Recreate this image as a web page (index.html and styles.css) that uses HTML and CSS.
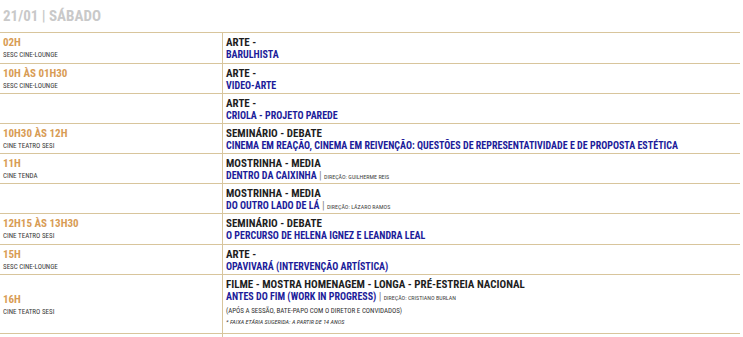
FILE: index.html
```html
<!DOCTYPE html>
<html lang="pt">
<head>
<meta charset="utf-8">
<link rel="stylesheet" href="styles.css">
</head>
<body>
<h2 class="day">21/01 | SÁBADO</h2>
<table class="prog">
  <tr class="r r31">
    <td class="when"><div class="time">02H</div><div class="place">SESC CINE-LOUNGE</div></td>
    <td class="what"><div class="cat">ARTE -</div><div class="title">BARULHISTA</div></td>
  </tr>
  <tr class="r">
    <td class="when"><div class="time">10H ÀS 01H30</div><div class="place">SESC CINE-LOUNGE</div></td>
    <td class="what"><div class="cat">ARTE -</div><div class="title">VIDEO-ARTE</div></td>
  </tr>
  <tr class="r">
    <td class="when"></td>
    <td class="what"><div class="cat">ARTE -</div><div class="title">CRIOLA - PROJETO PAREDE</div></td>
  </tr>
  <tr class="r">
    <td class="when"><div class="time">10H30 ÀS 12H</div><div class="place">CINE TEATRO SESI</div></td>
    <td class="what"><div class="cat">SEMINÁRIO - DEBATE</div><div class="title">CINEMA EM REAÇÃO, CINEMA EM REIVENÇÃO: QUESTÕES DE REPRESENTATIVIDADE E DE PROPOSTA ESTÉTICA</div></td>
  </tr>
  <tr class="r">
    <td class="when"><div class="time">11H</div><div class="place">CINE TENDA</div></td>
    <td class="what"><div class="cat">MOSTRINHA - MEDIA</div><div class="title">DENTRO DA CAIXINHA <span class="sep">|</span> <span class="dir">DIREÇÃO: GUILHERME REIS</span></div></td>
  </tr>
  <tr class="r">
    <td class="when"></td>
    <td class="what"><div class="cat">MOSTRINHA - MEDIA</div><div class="title">DO OUTRO LADO DE LÁ <span class="sep">|</span> <span class="dir">DIREÇÃO: LÁZARO RAMOS</span></div></td>
  </tr>
  <tr class="r r31">
    <td class="when"><div class="time">12H15 ÀS 13H30</div><div class="place">CINE TEATRO SESI</div></td>
    <td class="what"><div class="cat">SEMINÁRIO - DEBATE</div><div class="title">O PERCURSO DE HELENA IGNEZ E LEANDRA LEAL</div></td>
  </tr>
  <tr class="r">
    <td class="when"><div class="time">15H</div><div class="place">SESC CINE-LOUNGE</div></td>
    <td class="what"><div class="cat">ARTE -</div><div class="title">OPAVIVARÁ (INTERVENÇÃO ARTÍSTICA)</div></td>
  </tr>
  <tr class="r tall">
    <td class="when mid"><div class="time">16H</div><div class="place">CINE TEATRO SESI</div></td>
    <td class="what"><div class="cat">FILME - MOSTRA HOMENAGEM - LONGA - PRÉ-ESTREIA NACIONAL</div><div class="title">ANTES DO FIM (WORK IN PROGRESS) <span class="sep">|</span> <span class="dir">DIREÇÃO: CRISTIANO BURLAN</span></div><div class="note">(APÓS A SESSÃO, BATE-PAPO COM O DIRETOR E CONVIDADOS)</div><div class="age">* FAIXA ETÁRIA SUGERIDA: A PARTIR DE 14 ANOS</div></td>
  </tr>
  <tr class="r">
    <td class="when"></td>
    <td class="what"><div class="cat">&nbsp;</div></td>
  </tr>
</table>
</body>
</html>
```
FILE: styles.css
```css
html, body {
  margin: 0;
  padding: 0;
  background: #ffffff;
  overflow: hidden;
}
body {
  font-family: "Roboto Condensed", "DejaVu Sans Condensed", sans-serif;
  color: #222;
}
.day {
  margin: 0;
  padding: 7px 0 0 3px;
  height: 25px;
  font-size: 15px;
  line-height: 18px;
  font-weight: bold;
  color: #c9c9c9;
}
.prog {
  border-collapse: collapse;
  width: 740px;
  table-layout: fixed;
}
.prog td {
  border-top: 1px solid #d8c59c;
  border-bottom: 1px solid #d8c59c;
  padding: 0;
  vertical-align: top;
}
.r { height: 30px; }
.r31 { height: 31px; }
.tall { height: 59px; }
.when {
  width: 219px;
  padding-left: 3px !important;
  border-right: 1px solid #d8c59c;
}
.when.mid { vertical-align: middle !important; }
.what {
  padding-left: 3px !important;
}
.time {
  font-size: 11px;
  font-weight: bold;
  color: #d89c55;
  line-height: 13px;
  margin-top: 3px;
}
.place {
  font-size: 7px;
  color: #3a3a3a;
  line-height: 11px;
  margin-top: 1px;
}
.cat {
  font-size: 11px;
  color: #1e1e1e;
  line-height: 13px;
  margin-top: 3px;
  font-weight: bold;
}
.title {
  font-size: 10px;
  font-weight: bold;
  color: #1c1c9a;
  line-height: 11px;
}
.sep {
  color: #888;
  font-weight: normal;
  font-size: 11px;
}
.dir {
  font-size: 6px;
  color: #444;
  font-weight: normal;
}
.note {
  font-size: 7px;
  color: #333;
  line-height: 9px;
  margin-top: 4px;
}
.age {
  font-size: 6.2px;
  font-style: italic;
  color: #333;
  line-height: 9px;
  margin-top: 2px;
}
```
